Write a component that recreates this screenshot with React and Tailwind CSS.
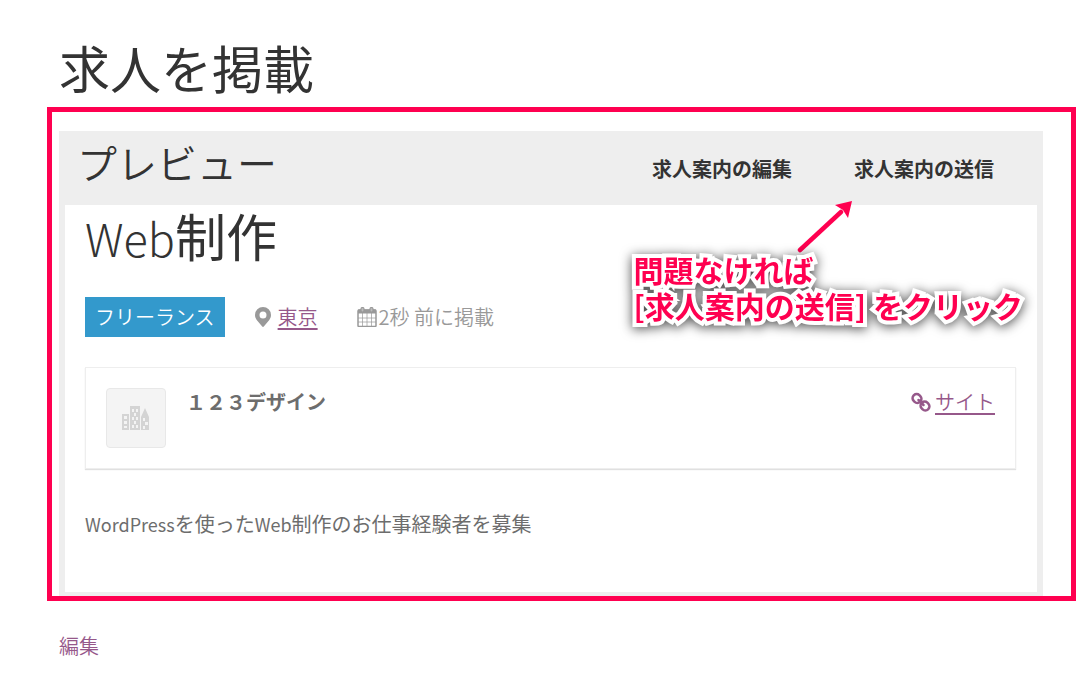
const PinIcon = () => (
  <svg viewBox="0 0 16 20" className="w-4 h-5" fill="currentColor" aria-hidden="true">
    <path fillRule="evenodd" d="M8 0a8 8 0 0 0-8 8c0 2 .8 3.400 1.700 5L7 19.300q1 1.200 2 0L14.300 13C15.200 11.400 16 10 16 8a8 8 0 0 0-8-8zm0 4.500a3.500 3.500 0 1 1 0 7 3.500 3.500 0 0 1 0-7z" />
  </svg>
);

const CalendarIcon = () => (
  <svg viewBox="0 0 20 20" className="w-5 h-5" fill="none" stroke="currentColor" aria-hidden="true">
    <rect x="1" y="3" width="18" height="16.500" rx="1" strokeWidth="1.500" />
    <path d="M1 2.500h18v4H1z" fill="currentColor" stroke="none" />
    <path d="M1 11h18M1 15h18M5.500 6v13M10 6v13M14.500 6v13" strokeWidth="1" opacity=".7" />
    <rect x="4" y="0.500" width="3" height="4.500" rx="1.500" fill="#bbbbbb" strokeWidth="1.200" />
    <rect x="13" y="0.500" width="3" height="4.500" rx="1.500" fill="#bbbbbb" strokeWidth="1.200" />
  </svg>
);

const LinkIcon = () => (
  <svg viewBox="0 0 20 20" className="w-5 h-5" fill="none" stroke="currentColor" strokeWidth="2.500" aria-hidden="true">
    <rect x="1.500" y="2.500" width="9" height="8" rx="3.800" transform="rotate(45 6 6.500)" />
    <rect x="9.500" y="10" width="9" height="8" rx="3.800" transform="rotate(45 14 14)" />
    <path d="M7.500 8l5 5" strokeLinecap="round" />
  </svg>
);

const CompanyIcon = () => (
  <svg viewBox="0 0 28 24" className="w-7 h-6" aria-hidden="true">
    <path d="M0 8h7v16H0zM8 0h10v24H8zM19 24V11l4-9 4 9v13z" fill="#d4d4d4" />
    <path
      d="M2 10h3v3H2zM2 15h3v3H2zM2 20h3v2H2zM10 3h2v3h-2zM14 3h2v3h-2zM12 7h2v3h-2zM10 11h2v3h-2zM14 11h2v3h-2zM12 15h2v3h-2zM10 19h2v3h-2zM14 19h2v3h-2zM21 12h2v3h-2zM23 16h3v3h-3zM21 20h2v3h-2z"
      fill="#f4f4f4"
    />
  </svg>
);

const PreviewHeader = () => (
  <header className="flex justify-between items-center h-[74px] pl-[18px] pr-[49px] bg-[#eeeeee] text-[#333333]">
    <h2 className="text-[40px] leading-[60px] pb-3 font-[350]">プレビュー</h2>
    <div className="flex gap-[62px] pt-[2px]">
      <button type="button" className="text-xl leading-7 font-bold">求人案内の編集</button>
      <button type="button" className="text-xl leading-7 font-bold">求人案内の送信</button>
    </div>
  </header>
);

// hint drawn over the preview, points at the submit button
const Hint = () => (
  <div className="absolute right-12 top-[88px] text-[#ff0050] pointer-events-none">
    <svg viewBox="0 0 56 54" className="ml-[163px] w-14 h-[54px]" aria-hidden="true">
      <path d="M3 50L44 12" stroke="currentColor" strokeWidth="4.500" strokeLinecap="round" />
      <path d="M55 1L38 5l8 5 5 8z" fill="currentColor" />
    </svg>
    <p className="-mt-[3px] text-[30px] leading-9 font-bold whitespace-nowrap [paint-order:stroke_fill] [-webkit-text-stroke:8px_white] [filter:drop-shadow(0_2px_6px_rgba(0,0,0,0.7))]">
      問題なければ
      <br />
      [求人案内の送信] をクリック
    </p>
  </div>
);

const JobPreview = () => (
  <section className="text-xl leading-8">
    <PreviewHeader />
    <div className="border-x-6 border-b-4 border-[#eeeeee] pl-5 pr-[21px] pb-[52px] text-[#6d6d6d]">
      <h1 className="text-[51px] leading-[60px] text-[#333333]">
        <span className="text-[45px] leading-none font-light">Web</span>制作
      </h1>

      <ul className="flex items-center mt-8 text-[#999999] font-[350]">
        <li className="bg-[#3399cc] text-white px-[10px] leading-10">フリーランス</li>
        <li className="flex items-center gap-[7px] ml-[30px]">
          <PinIcon />
          <a href="#location" className="text-[#96588a] underline underline-offset-3 decoration-2">東京</a>
        </li>
        <li className="flex items-center gap-[2px] ml-[39px]">
          <CalendarIcon />
          <span>2秒 前に掲載</span>
        </li>
      </ul>

      <div className="flex items-start mt-[30px] p-5 border border-[#eeeeee] shadow-[0_1px_1px_rgba(0,0,0,0.12)]">
        <div className="flex items-center justify-center size-[60px] rounded border border-[#e8e8e8] bg-[#f4f4f4]">
          <CompanyIcon />
        </div>
        <strong className="ml-5 -mt-[2px]">１２３デザイン</strong>
        <a href="#site" className="flex items-center gap-1 ml-auto -mt-[2px] text-[#96588a] font-[350]">
          <LinkIcon />
          <span className="underline underline-offset-3 decoration-2">サイト</span>
        </a>
      </div>

      <p className="mt-[39px]">
        <span className="text-lg leading-none">WordPress</span>を使った<span className="text-lg leading-none">Web</span>制作のお仕事経験者を募集
      </p>
    </div>
  </section>
);

const App = () => {
  return (
    <main className="bg-white pt-[30px] pb-3 pl-[47px] pr-[14px] font-['Noto_Sans_CJK_JP',sans-serif]">
      <h1 className="pl-3 pb-[2px] text-[51px] leading-[75px] text-[#333333]">求人を掲載</h1>
      <div className="relative border-5 border-[#ff0050] pt-[19px] pl-[7px] pr-7">
        <JobPreview />
        <Hint />
      </div>
      <p className="pl-3 mt-[29px] text-xl leading-8 font-[350]">
        <a href="#edit" className="text-[#96588a]">編集</a>
      </p>
    </main>
  );
};

export default App;
